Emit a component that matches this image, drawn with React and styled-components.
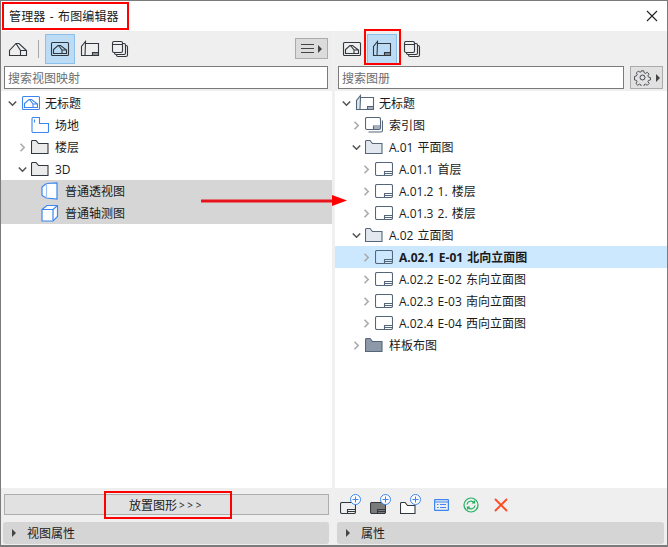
import styled, { createGlobalStyle } from "styled-components";

const GlobalStyle = createGlobalStyle`
  html, body { margin: 0; padding: 0; background: #fff; }
  * { box-sizing: border-box; }
  body { font-family: "Open Sans", "Noto Sans CJK SC", sans-serif; font-size: 12px; color: #1a1a1a; word-spacing: 1px; }
`;

const BLUE = "#3d86f0";
const SLATE = "#55667a";
const DARK = "#33383f";

const SiteHouse = ({ c = DARK }) => (
  <svg width="20" height="16" viewBox="0 0 20 16" fill="none" stroke={c} strokeWidth="1.1">
    <path d="M1.500 14.500V9.500L8 2.500h3l7.500 7v5h-17Z" />
    <path d="M8 2.500l4.500 7v5M12.500 9.500h6" />
  </svg>
);
const FramedHouse = ({ c = DARK }) => (
  <svg width="20" height="16" viewBox="0 0 20 16" fill="none" stroke={c} strokeWidth="1.1">
    <rect x="1.500" y="1.500" width="17" height="13" rx="1" />
    <path d="M3.500 12.500V8.500L8 4.500h2.500l6 4.500v3.500h-13ZM8.500 4.500l3.500 4.500v3.500M12 9h4.500" />
  </svg>
);
const BookIcon = ({ c = DARK, fill = "none" }) => (
  <svg width="20" height="18" viewBox="0 0 20 18" fill="none" stroke={c} strokeWidth="1.1">
    <path d="M1.500 15.500v-9l4-5v2L5 15.500Z" fill={fill} />
    <path d="M5.500 3.500h13v12h-17" />
    <path d="M12.500 15.500v-3h6M12.500 14h6" />
  </svg>
);
const StackIcon = ({ c = DARK }) => (
  <svg width="18" height="18" viewBox="0 0 18 18" fill="none" stroke={c} strokeWidth="1.1">
    <rect x="1.500" y="1.500" width="10" height="11" rx="1.500" />
    <path d="M1.500 4.500h10M11.500 3.500h1.500a1.500 1.500 0 0 1 1.500 1.500v8a1.500 1.500 0 0 1-1.500 1.500H5a1.500 1.500 0 0 1-1.500-1.500" />
    <path d="M14.500 5.500h.5a1.500 1.500 0 0 1 1.500 1.500v8a1.500 1.500 0 0 1-1.500 1.500H7a1.500 1.500 0 0 1-1.500-1.500v-.5" />
  </svg>
);
const SheetIcon = ({ fill = "none", c = SLATE, w = 18, h = 14 }) => (
  <svg width={w} height={h} viewBox={`0 0 ${w} ${h}`} fill="none" stroke={c} strokeWidth="1.1">
    <rect x=".5" y=".5" width={w - 1} height={h - 1} rx="1.500" fill={fill} />
    <path d={`M${w - 8.5} ${h - 0.5}v-4h8M${w - 8.5} ${h - 2.5}h8`} />
  </svg>
);
const IndexIcon = () => (
  <svg width="18" height="16" viewBox="0 0 18 16" fill="none" stroke={SLATE} strokeWidth="1.1">
    <rect x=".5" y=".5" width="15" height="12" rx="1.500" />
    <path d="M17.500 3.500v10a1.500 1.500 0 0 1-1.500 1.500H3.500M8.500 12.500v-3.500h7M8.500 11h7" />
  </svg>
);
const FolderIcon = ({ fill = "#ebebeb", c = DARK, w = 18, h = 14 }) => (
  <svg width={w} height={h} viewBox={`0 0 ${w} ${h}`} fill={fill} stroke={c} strokeWidth="1.1">
    <path d={`M.5 ${h - 0.5}V1.500a1 1 0 0 1 1-1h3.500l2.500 3h${w - 8.5}v${h - 4}Z`} />
  </svg>
);
const SiteTree = () => (
  <svg width="18" height="16" viewBox="0 0 18 16" fill="none" stroke={BLUE} strokeWidth="1.1">
    <path d="M1 1.500a1 1 0 0 1 1-1h6.500v6h9v8a1 1 0 0 1-1 1H2a1 1 0 0 1-1-1Z" />
    <path d="M3.500 2.500v3" />
  </svg>
);
const Persp = () => (
  <svg width="18" height="18" viewBox="0 0 18 18" fill="#fff" stroke={BLUE} strokeWidth="1.200">
    <path d="M1 5 5.500 1.500 16 1v16l-10.500-1L1 13.500Z" />
    <path d="M5.500 1.500V16" stroke="#9cc2f7" />
  </svg>
);
const Axon = () => (
  <svg width="18" height="18" viewBox="0 0 18 18" fill="#fff" stroke={BLUE} strokeWidth="1.200">
    <path d="M1 5.500 6 1.500h10.500v11L12 17H1Z" />
    <path d="M1 5.500h11V17M12 5.500l4.500-4" />
  </svg>
);
const Gear = () => (
  <svg width="17" height="17" viewBox="0 0 24 24" fill="none" stroke={DARK} strokeWidth="1.300">
    <circle cx="12" cy="12" r="3.500" />
    <path d="M10 1.500h4l.7 3.200 2 .9 2.800-1.800 2.800 2.800-1.800 2.800.9 2 3.100.7v3.800l-3.100.7-.9 2 1.800 2.800-2.800 2.800-2.800-1.800-2 .9-.7 3h-4l-.7-3-2-.9-2.800 1.800-2.800-2.800 1.800-2.800-.9-2-3.100-.7V10.200l3.100-.7.9-2L2.600 4.700l2.800-2.800 2.800 1.800 2-.9Z" transform="translate(1.200 1.200) scale(.9)" />
  </svg>
);
const Plus = styled.span`
  position: absolute;
  top: 1px;
  right: 5px;
  width: 11px;
  height: 11px;
  display: flex;
`;
const PlusBadge = () => (
  <Plus>
    <svg width="11" height="11" viewBox="0 0 11 11" fill="#fff" stroke={BLUE} strokeWidth="1">
      <circle cx="5.500" cy="5.500" r="5" />
      <path d="M5.500 2.500v6M2.500 5.500h6" />
    </svg>
  </Plus>
);
const Chevron = ({ open }) => (
  <svg width="9" height="9" viewBox="0 0 9 9" fill="none" stroke={open ? "#555" : "#aaa"} strokeWidth="1.600">
    {open ? <path d="M.8 2.500 4.500 6.200l3.700-3.700" /> : <path d="M2.500.8 6.200 4.500 2.500 8.200" />}
  </svg>
);

const Window = styled.div`
  width: 668px;
  height: 547px;
  border: 1px solid #7b7b7b;
  border-bottom-width: 2px;
  display: flex;
  flex-direction: column;
  background: #fff;
  overflow: hidden;
  position: relative;
`;
const TitleBar = styled.div`
  height: 30px;
  flex: none;
  display: flex;
  align-items: center;
  justify-content: space-between;
  padding: 0 9px 0 8px;
  font-size: 12px;
  letter-spacing: 0.15px;
`;
const Panes = styled.div`
  flex: 1;
  display: flex;
  min-height: 0;
`;
const Pane = styled.div`
  width: ${(p) => p.$w}px;
  flex: none;
  display: flex;
  flex-direction: column;
`;
const Gutter = styled.div`
  width: 3px;
  flex: none;
  background: #f0f0f0;
`;
const Toolbar = styled.div`
  height: 35px;
  flex: none;
  background: #efefef;
  display: flex;
  align-items: center;
  padding: 0 4px 0 2px;
`;
const ToolBtn = styled.div`
  width: 30px;
  height: 30px;
  flex: none;
  display: flex;
  align-items: center;
  justify-content: center;
  background: ${(p) => (p.$active ? "#bcdcf5" : "transparent")};
  border: 1px solid ${(p) => (p.$active ? "#8cc0ea" : "transparent")};
`;
const Sep = styled.div`
  width: 1px;
  height: 18px;
  background: #a8a8a8;
  margin: 0 6px 0 5px;
`;
const MenuBtn = styled.div`
  margin-left: auto;
  width: 33px;
  height: 21px;
  display: flex;
  align-items: center;
  justify-content: center;
  gap: 4px;
  background: #dcdcdc;
  border: 1px solid #ababab;
`;
const SearchRow = styled.div`
  height: 25px;
  flex: none;
  background: #efefef;
  display: flex;
  gap: 6px;
  padding: 0 4px 2px 3px;
`;
const Search = styled.div`
  flex: 1;
  height: 23px;
  border: 1px solid #7a7a7a;
  background: #fff;
  color: #6d6d6d;
  display: flex;
  align-items: center;
  padding-left: 3px;
  font-size: 12px;
`;
const GearBtn = styled(MenuBtn)`
  margin: 0;
  width: 33px;
  height: 23px;
  gap: 5px;
  background: #e1e1e1;
`;
const Arrowhead = styled.span`
  width: 0;
  height: 0;
  border-left: 4px solid #444;
  border-top: 4px solid transparent;
  border-bottom: 4px solid transparent;
`;
const Tree = styled.div`
  flex: 1;
  padding-top: 1px;
  background: #fff;
`;
const Row = styled.div`
  height: 22px;
  display: flex;
  align-items: center;
  padding-left: ${(p) => p.$depth * 10 + 6}px;
  background: ${(p) => (p.$sel ? "#cce8ff" : p.$grey ? "#d6d6d6" : "transparent")};
  font-weight: ${(p) => (p.$sel ? 700 : 400)};
  white-space: nowrap;
`;
const Toggle = styled.span`
  width: 10px;
  height: 10px;
  flex: none;
  display: flex;
  align-items: center;
  justify-content: center;
  margin-right: 4px;
`;
const RowIcon = styled.span`
  width: 20px;
  flex: none;
  display: flex;
  align-items: center;
  margin-right: 4px;
`;
const ActionBar = styled.div`
  height: 31px;
  flex: none;
  background: #efefef;
  display: flex;
  align-items: center;
  padding: 2px 3px 0 ${(p) => p.$left || 3}px;
`;
const PlaceBtn = styled.div`
  flex: 1;
  height: 21px;
  background: #e1e1e1;
  border: 1px solid #adadad;
  display: flex;
  align-items: center;
  justify-content: center;
`;
const Chars = styled.span`
  font-size: 10px;
  letter-spacing: 2.6px;
  margin-left: 2px;
`;
const Action = styled.div`
  width: 30px;
  height: 24px;
  flex: none;
  display: flex;
  align-items: center;
  justify-content: center;
  position: relative;
`;
const BadgedAction = styled(Action)`
  padding: 6px 6px 0 0;
`;
const PropsWrap = styled.div`
  height: 26px;
  flex: none;
  background: #efefef;
  padding: 3px 3px 1px 2px;
`;
const PropsBar = styled.div`
  height: 22px;
  border-radius: 3px;
  background: #d5d5d5;
  display: flex;
  align-items: center;
  padding-left: 9px;
  gap: 11px;
`;

/* red annotations drawn over the dialog */
const Mark = styled.div`
  position: absolute;
  left: ${(p) => p.$x}px;
  top: ${(p) => p.$y}px;
  width: ${(p) => p.$w}px;
  height: ${(p) => p.$h}px;
  border: 2px solid #f00;
  pointer-events: none;
`;
const ArrowOverlay = styled.svg`
  position: absolute;
  left: 200px;
  top: 192px;
`;

const leftRows = [
  { d: 0, t: "无标题", open: true, icon: <FramedHouse c={BLUE} /> },
  { d: 1, t: "场地", none: true, icon: <SiteTree /> },
  { d: 1, t: "楼层", icon: <FolderIcon /> },
  { d: 1, t: "3D", open: true, icon: <FolderIcon /> },
  { d: 2, t: "普通透视图", none: true, grey: true, icon: <Persp /> },
  { d: 2, t: "普通轴测图", none: true, grey: true, icon: <Axon /> },
];

const rightRows = [
  { d: 0, t: "无标题", open: true, icon: <BookIcon c={SLATE} fill="#dfe5ee" /> },
  { d: 1, t: "索引图", icon: <IndexIcon /> },
  { d: 1, t: "A.01 平面图", open: true, icon: <FolderIcon fill="#e2e7f0" c={SLATE} /> },
  { d: 2, t: "A.01.1 首层", icon: <SheetIcon /> },
  { d: 2, t: "A.01.2 1. 楼层", icon: <SheetIcon /> },
  { d: 2, t: "A.01.3 2. 楼层", icon: <SheetIcon /> },
  { d: 1, t: "A.02 立面图", open: true, icon: <FolderIcon fill="#e2e7f0" c={SLATE} /> },
  { d: 2, t: "A.02.1 E-01 北向立面图", sel: true, icon: <SheetIcon /> },
  { d: 2, t: "A.02.2 E-02 东向立面图", icon: <SheetIcon /> },
  { d: 2, t: "A.02.3 E-03 南向立面图", icon: <SheetIcon /> },
  { d: 2, t: "A.02.4 E-04 西向立面图", icon: <SheetIcon /> },
  { d: 1, t: "样板布图", icon: <FolderIcon fill="#8d99a8" c={SLATE} /> },
];

const TreeRows = ({ rows }) =>
  rows.map((r) => (
    <Row key={r.t} $depth={r.d} $sel={r.sel} $grey={r.grey}>
      <Toggle>{!r.none && <Chevron open={r.open} />}</Toggle>
      <RowIcon>{r.icon}</RowIcon>
      {r.t}
    </Row>
  ));

export default function App() {
  return (
    <>
      <GlobalStyle />
      <Window>
        <TitleBar>
          <span>管理器 - 布图编辑器</span>
          <svg width="12" height="12" viewBox="0 0 12 12" stroke="#222" strokeWidth="1.100">
            <path d="M1 1l10 10M11 1 1 11" />
          </svg>
        </TitleBar>
        <Panes>
          <Pane $w={331}>
            <Toolbar>
              <ToolBtn><SiteHouse /></ToolBtn>
              <Sep />
              <ToolBtn $active><FramedHouse /></ToolBtn>
              <ToolBtn><BookIcon /></ToolBtn>
              <ToolBtn><StackIcon /></ToolBtn>
              <MenuBtn>
                <svg width="13" height="9" viewBox="0 0 13 9" stroke="#444" strokeWidth="1">
                  <path d="M0 .5h13M0 4.500h13M0 8.500h13" />
                </svg>
                <Arrowhead />
              </MenuBtn>
            </Toolbar>
            <SearchRow>
              <Search>搜索视图映射</Search>
            </SearchRow>
            <Tree><TreeRows rows={leftRows} /></Tree>
            <ActionBar>
              <PlaceBtn>放置图形<Chars>&gt;&gt;&gt;</Chars></PlaceBtn>
            </ActionBar>
            <PropsWrap>
              <PropsBar><Arrowhead />视图属性</PropsBar>
            </PropsWrap>
          </Pane>
          <Gutter />
          <Pane $w={332}>
            <Toolbar>
              <ToolBtn><FramedHouse /></ToolBtn>
              <ToolBtn $active><BookIcon /></ToolBtn>
              <ToolBtn><StackIcon /></ToolBtn>
            </Toolbar>
            <SearchRow>
              <Search>搜索图册</Search>
              <GearBtn><Gear /><Arrowhead /></GearBtn>
            </SearchRow>
            <Tree><TreeRows rows={rightRows} /></Tree>
            <ActionBar $left={1}>
              <BadgedAction><SheetIcon c={DARK} w={16} h={12} /><PlusBadge /></BadgedAction>
              <BadgedAction><SheetIcon c={DARK} w={16} h={12} fill="#7a7a7a" /><PlusBadge /></BadgedAction>
              <BadgedAction><FolderIcon fill="#fff" w={16} h={12} /><PlusBadge /></BadgedAction>
              <Action>
                <svg width="15" height="12" viewBox="0 0 15 12" fill="none" stroke={BLUE} strokeWidth="1.200">
                  <rect x=".6" y=".6" width="13.800" height="10.800" rx=".5" />
                  <path d="M.6 3h13.800M3 5.500h1.500M3 8.500h1.500M6 5.500h6M6 8.500h6" />
                </svg>
              </Action>
              <Action>
                <svg width="16" height="16" viewBox="0 0 16 16" fill="none" stroke="#22b060" strokeWidth="1.200">
                  <circle cx="8" cy="8" r="7" />
                  <path d="M4 7.500A4 4 0 0 1 11 5.500M11.500 3.500v2.500H9M12 8.500A4 4 0 0 1 5 10.500M4.500 12.500V10H7" />
                </svg>
              </Action>
              <Action>
                <svg width="14" height="14" viewBox="0 0 14 14" fill="none" stroke="#ff4a22" strokeWidth="1.900">
                  <path d="M1 1l12 12M13 1 1 13" />
                </svg>
              </Action>
            </ActionBar>
            <PropsWrap>
              <PropsBar><Arrowhead />属性</PropsBar>
            </PropsWrap>
          </Pane>
        </Panes>
        <Mark $x={1} $y={1} $w={127} $h={28} />
        <Mark $x={363} $y={28} $w={37} $h={36} />
        <Mark $x={103} $y={490} $w={128} $h={28} />
        <ArrowOverlay width="148" height="16" viewBox="0 0 148 16">
          <path d="M0 6.500h132v3H0Z" fill="#e8141c" />
          <path d="M131 2 146 7.500 131 13Z" fill="#f00" />
        </ArrowOverlay>
      </Window>
    </>
  );
}
